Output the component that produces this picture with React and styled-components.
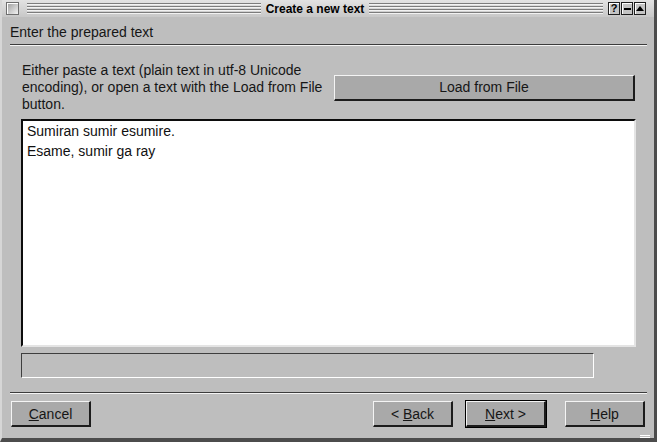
import React from 'react';
import styled, { createGlobalStyle } from 'styled-components';

const GlobalStyle = createGlobalStyle`
  html, body {
    margin: 0;
    padding: 0;
    background: #bebebe;
  }
  body {
    font-family: "Liberation Sans", Arial, sans-serif;
    font-size: 14px;
    color: #161616;
  }
`;

const App = () => {
  return (
    <>
      <GlobalStyle />
      <Window>
        <TitleBar>
          <CloseBox />
          <Groove />
          <Title>Create a new text</Title>
          <Groove />
          <TitleButtons>
            <TitleButton>?</TitleButton>
            <TitleButton>
              <Dash />
            </TitleButton>
            <TitleButton>
              <Triangle />
            </TitleButton>
          </TitleButtons>
        </TitleBar>

        <Header>Enter the prepared text</Header>
        <Rule />

        <Body>
          <IntroRow>
            <Intro>
              Either paste a text (plain text in utf-8 Unicode encoding), or open a text with
              the Load from File button.
            </Intro>
            <Button $wide>Load from File</Button>
          </IntroRow>

          <TextBox>
            {'Sumiran sumir esumire.\nEsame, sumir ga ray'}
          </TextBox>

          <StatusField />
        </Body>

        <Rule $bottom />

        <ButtonRow>
          <Button>
            <u>C</u>ancel
          </Button>
          <Spacer />
          <Button>
            &lt; <u>B</u>ack
          </Button>
          <Button $default>
            <u>N</u>ext &gt;
          </Button>
          <Button>
            <u>H</u>elp
          </Button>
        </ButtonRow>
        <Grip />
      </Window>
    </>
  );
};

export default App;

const Window = styled.div`
  position: relative;
  box-sizing: border-box;
  width: 657px;
  height: 442px;
  display: flex;
  flex-direction: column;
  background: #bebebe;
  border-left: 2px solid #d6d6d6;
  border-right: 3px solid #4c4c4c;
  border-bottom: 4px solid #4c4c4c;
`;

const TitleBar = styled.div`
  height: 17px;
  display: flex;
  align-items: center;
  padding: 0 8px 0 4px;
  background: linear-gradient(#e2e2e2, #c8c8c8);
`;

const CloseBox = styled.div`
  box-sizing: border-box;
  width: 13px;
  height: 13px;
  margin-right: 8px;
  border: 1px solid #6e6e6e;
  box-shadow: inset 1px 1px 0 #ffffff;
  background: linear-gradient(135deg, #9c9c9c, #f2f2f2);
`;

const Groove = styled.div`
  flex: 1;
  height: 11px;
  background: repeating-linear-gradient(
    to bottom,
    #7c7c7c 0 1px,
    #f2f2f2 1px 2px,
    transparent 2px 3px
  );
`;

const Title = styled.div`
  font-size: 12px;
  font-weight: bold;
  color: #000;
  padding: 0 5px;
  white-space: nowrap;
`;

const TitleButtons = styled.div`
  display: flex;
  gap: 1px;
  margin-left: 5px;
`;

const TitleButton = styled.div`
  box-sizing: border-box;
  width: 12px;
  height: 13px;
  display: flex;
  align-items: center;
  justify-content: center;
  background: #c4c4c4;
  border: 1px solid #1e1e1e;
  box-shadow: inset 1px 1px 0 #ffffff;
  font-size: 11px;
  font-weight: bold;
  color: #000;
  line-height: 1;
`;

const Dash = styled.div`
  width: 7px;
  height: 2px;
  background: #000;
`;

const Triangle = styled.div`
  width: 0;
  height: 0;
  border-left: 4px solid transparent;
  border-right: 4px solid transparent;
  border-bottom: 5px solid #000;
  margin-top: -1px;
`;

const Header = styled.div`
  padding: 7px 8px 0;
  line-height: 16px;
  height: 16px;
  margin-bottom: 4px;
`;

const Rule = styled.div`
  height: 1px;
  margin: ${(p) => (p.$bottom ? '14px 7px 0 8px' : '0 7px 0 8px')};
  background: #3c3c3c;
  border-bottom: 1px solid #f4f4f4;
`;

const Body = styled.div`
  display: flex;
  flex-direction: column;
  padding: 16px 18px 0 19px;
`;

const IntroRow = styled.div`
  display: flex;
  align-items: center;
  gap: 6px;
  padding-right: 1px;
`;

const Intro = styled.div`
  width: 306px;
  padding-left: 1px;
  line-height: 17px;
`;

const Button = styled.button`
  box-sizing: border-box;
  flex: ${(p) => (p.$wide ? '1' : 'none')};
  width: ${(p) => (p.$wide ? 'auto' : '80px')};
  height: 26px;
  padding: 0;
  margin: ${(p) => (p.$default ? '0 1px' : '0')};
  font-family: "Liberation Sans", Arial, sans-serif;
  font-size: 14px;
  color: #161616;
  background: #a9a9a9;
  border-top: 1px solid #f4f4f4;
  border-left: 1px solid #f4f4f4;
  border-right: 2px solid #1c1c1c;
  border-bottom: 2px solid #1c1c1c;
  box-shadow: ${(p) => (p.$default ? '0 0 0 1px #000' : 'none')};
  cursor: pointer;

  u {
    text-decoration: underline;
    text-underline-offset: 1px;
  }
`;

const TextBox = styled.div`
  box-sizing: border-box;
  height: 228px;
  margin-top: 6px;
  padding: 0 4px;
  line-height: 20px;
  white-space: pre-line;
  background: #ffffff;
  color: #101010;
  border-top: 2px solid #0c0c0c;
  border-left: 2px solid #0c0c0c;
  border-right: 2px solid #e4e4e4;
  border-bottom: 2px solid #e4e4e4;
  box-shadow: inset -1px -1px 0 #ffffff;
`;

const StatusField = styled.div`
  box-sizing: border-box;
  width: 573px;
  height: 25px;
  margin-top: 6px;
  border-top: 1px solid #3e3e3e;
  border-left: 1px solid #3e3e3e;
  border-right: 1px solid #ffffff;
  border-bottom: 1px solid #ffffff;
`;

const ButtonRow = styled.div`
  display: flex;
  align-items: center;
  padding: 7px 9px 0 9px;

  & > button:nth-of-type(3) {
    margin-left: 13px;
  }
  & > button:nth-of-type(4) {
    margin-left: 18px;
  }
`;

const Spacer = styled.div`
  flex: 1;
`;

const Grip = styled.div`
  position: absolute;
  right: 4px;
  bottom: 0;
  width: 10px;
  height: 3px;
  background: repeating-linear-gradient(
    to bottom,
    #ffffff 0 1px,
    transparent 1px 2px
  );
`;
